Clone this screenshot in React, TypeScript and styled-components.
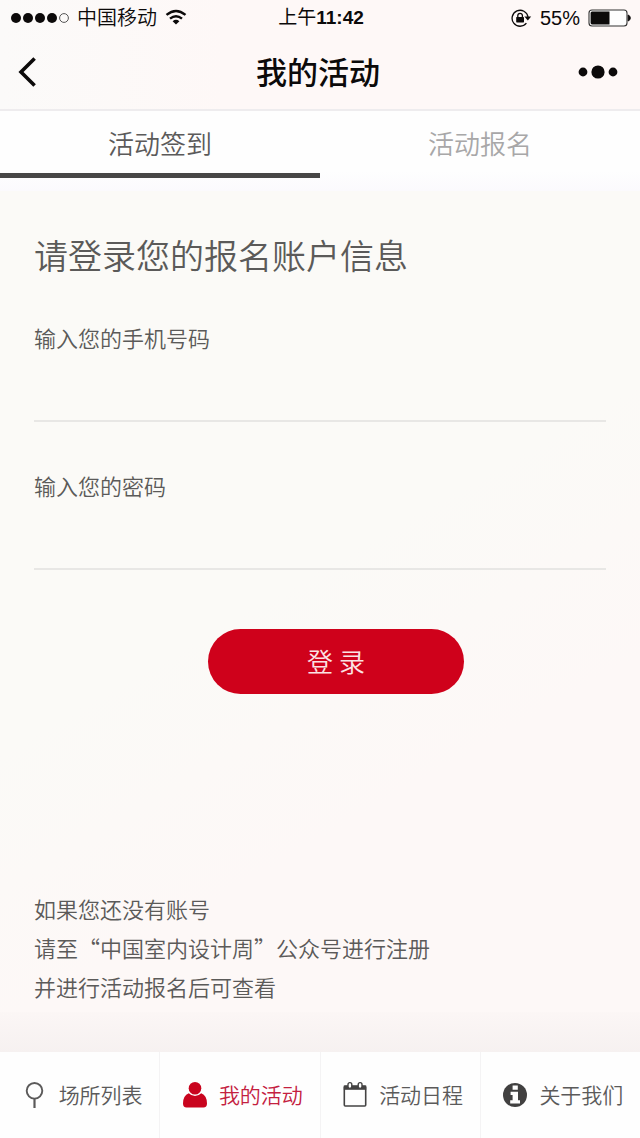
import React from 'react';
import styled, { createGlobalStyle } from 'styled-components';

const GlobalStyle = createGlobalStyle`
  *, *::before, *::after { box-sizing: border-box; }
  body {
    margin: 0;
    color: #5b5a59;
    font-family: "Noto Sans CJK SC", "Liberation Sans", sans-serif;
    font-weight: 350;
    background: #fdf8f7;
  }
  button, input { font: inherit; color: inherit; }
`;

const Screen = styled.div`
  display: flex;
  flex-direction: column;
  min-height: 100vh;
  background: linear-gradient(150deg, #fbfaf7 0%, #fbfaf7 50%, #fdf8f7 68%);
`;

const Top = styled.header`
  display: flex;
  flex-direction: column;
  color: #0c0a0a;
  background: linear-gradient(90deg, #fbfaf9 0%, #fef8f7 35%);
  border-bottom: 2px solid #eeecee;
`;

const StatusBar = styled.div`
  display: grid;
  grid-template-columns: 1fr auto 1fr;
  align-items: center;
  height: 36px;
  padding: 0 9px 0 11px;
  font-family: "Liberation Sans", "Noto Sans CJK SC", sans-serif;
  font-size: 20px;
  line-height: 24px;
`;

const StatusGroup = styled.div<{ $end?: boolean }>`
  display: flex;
  align-items: center;
  justify-content: ${(p) => (p.$end ? 'flex-end' : 'flex-start')};
  gap: 8px;
  font-weight: ${(p) => (p.$end ? 400 : 350)};
`;

const Clock = styled.time`
  font-size: 19px;
  font-weight: 400;
  b { font-weight: 700; }
`;

const TitleBar = styled.div`
  display: grid;
  grid-template-columns: 1fr auto 1fr;
  align-items: center;
  height: 73px;
  padding: 0 22px 2px 18px;
`;

const PageTitle = styled.h1`
  margin: 0;
  padding-bottom: 2px;
  font-size: 31px;
  line-height: 40px;
  font-weight: 500;
`;

const IconButton = styled.button<{ $end?: boolean }>`
  display: flex;
  justify-self: ${(p) => (p.$end ? 'end' : 'start')};
  padding: 0;
  border: 0;
  background: none;
  cursor: pointer;
`;

const Tabs = styled.nav`
  display: flex;
  height: 80px;
  padding-bottom: 13px;
  background: linear-gradient(#fefefe 75%, #fbfafd 100%);
`;

const Tab = styled.button<{ $active?: boolean }>`
  flex: 1;
  padding: 2px 0 0;
  border: 0;
  border-bottom: 5px solid ${(p) => (p.$active ? '#474646' : 'transparent')};
  background: none;
  color: ${(p) => (p.$active ? '#5b5a5a' : '#a8a7a8')};
  font-size: 26px;
  line-height: 32px;
  cursor: pointer;
`;

const Main = styled.main`
  flex: 1;
  display: flex;
  flex-direction: column;
  padding: 40px 34px 0;
`;

const Heading = styled.h2`
  margin: 0 0 38px;
  font-size: 34px;
  line-height: 48px;
  font-weight: 350;
`;

const Field = styled.div`
  display: flex;
  flex-direction: column;
  margin-bottom: 43px;
`;

const FieldLabel = styled.label`
  font-size: 22px;
  line-height: 40px;
`;

const TextInput = styled.input`
  width: 100%;
  height: 65px;
  padding: 0 0 4px;
  border: 0;
  border-bottom: 2px solid #e8e7e5;
  border-radius: 0;
  outline: none;
  background: transparent;
  font-size: 24px;
`;

const Actions = styled.div`
  display: flex;
  justify-content: center;
  padding: 16px 0 0 32px;
`;

const SubmitButton = styled.button`
  width: 256px;
  height: 65px;
  padding: 0 0 2px;
  border: 0;
  border-radius: 33px;
  background: #cf011b;
  color: #fbe3e4;
  font-size: 26px;
  cursor: pointer;
`;

const Notes = styled.p`
  margin: auto 0 0;
  padding-bottom: 6px;
  font-size: 22px;
  line-height: 39px;
`;

const Shade = styled.div`
  height: 40px;
  background: linear-gradient(rgba(120, 110, 120, 0.01), rgba(120, 110, 120, 0.05));
`;

const TabBar = styled.nav`
  display: flex;
  height: 86px;
  background: #fefefe;
`;

const TabBarLink = styled.a<{ $active?: boolean }>`
  flex: 1;
  display: flex;
  align-items: center;
  justify-content: center;
  gap: 12px;
  padding-left: 6px;
  color: ${(p) => (p.$active ? '#c4203f' : '#5b5a5a')};
  font-size: 21px;
  line-height: 32px;
  white-space: nowrap;
  text-decoration: none;
  & + & { border-left: 1px solid #f4f3f4; }
`;

const TabBarLabel = styled.span`
  padding-bottom: 3px;
`;

const SignalDots = () => (
  <svg width="58" height="12" viewBox="0 0 58 12" aria-hidden="true">
    {[5, 17, 29, 41].map((x) => (
      <circle key={x} cx={x} cy="6" r="5" fill="#0c0a0a" />
    ))}
    <circle cx="53" cy="6" r="4.4" fill="none" stroke="#555" strokeWidth="1" />
  </svg>
);

const Wifi = () => (
  <svg width="22" height="18" viewBox="0 0 22 18" fill="none" stroke="#0c0a0a" aria-hidden="true">
    <path d="M1.5 5.9 Q11 -2 20.5 5.9" strokeWidth="2.4" />
    <path d="M5 9.7 Q11 4.6 17 9.7" strokeWidth="2.4" />
    <path d="M7.6 12.3 Q11 9.4 14.4 12.3 L11 15.6 Z" fill="#0c0a0a" stroke="none" />
  </svg>
);

const RotationLock = () => (
  <svg width="21" height="18" viewBox="0 0 21 18" fill="none" aria-hidden="true">
    <path d="M15.4 14.2 A8 8 0 1 1 17 8" stroke="#0c0a0a" strokeWidth="1.3" />
    <path d="M13.4 7.4 H20.2 L16.8 11.4 Z" fill="#0c0a0a" />
    <rect x="5.2" y="8" width="7.8" height="5.4" rx="0.6" fill="#0c0a0a" />
    <path d="M6.8 8.4 V6.6 A2.3 2.3 0 0 1 11.4 6.6 V8.4" stroke="#0c0a0a" strokeWidth="1.3" />
  </svg>
);

const Battery = () => (
  <svg width="43" height="18" viewBox="0 0 43 18" aria-hidden="true">
    <rect x="1" y="1" width="38" height="16" rx="3" fill="#fefefe" stroke="#333" strokeWidth="1.1" />
    <path d="M4 2.6 H21.5 V15.4 H4 A1.5 1.5 0 0 1 2.6 14 V4 A1.5 1.5 0 0 1 4 2.6 Z" fill="#0c0a0a" />
    <path d="M40.2 6 A3.2 3.2 0 0 1 40.2 12 Z" fill="#0c0a0a" stroke="#0c0a0a" />
  </svg>
);

const BackArrow = () => (
  <svg width="19" height="32" viewBox="0 0 19 32" fill="none" aria-hidden="true">
    <path d="M16.6 2.4 L3 16 L16.6 29.6" stroke="#0c0a0a" strokeWidth="3.6" />
  </svg>
);

const MoreDots = () => (
  <svg width="40" height="14" viewBox="0 0 40 14" fill="#0c0a0a" aria-hidden="true">
    <circle cx="5" cy="7" r="4.4" />
    <circle cx="20" cy="7" r="6.6" />
    <circle cx="35" cy="7" r="4.4" />
  </svg>
);

const PlaceIcon = () => (
  <svg width="24" height="28" viewBox="0 0 24 28" fill="none" stroke="#5b5a5a" aria-hidden="true">
    <circle cx="11.5" cy="9.8" r="7.8" strokeWidth="1.9" />
    <path d="M11.5 17.6 V27" strokeWidth="2.2" />
  </svg>
);

const PersonIcon = () => (
  <svg width="24" height="28" viewBox="0 0 24 28" fill="#c9041e" aria-hidden="true">
    <circle cx="12" cy="7.3" r="6.3" />
    <path d="M5.8 12.2 Q8.5 15 12 15 Q15.5 15 18.2 12.2 Q24 14.5 24 22.5 Q24 26.6 20.4 26.6 H3.6 Q0 26.6 0 22.5 Q0 14.5 5.8 12.2 Z" />
  </svg>
);

const CalendarIcon = () => (
  <svg width="24" height="28" viewBox="0 0 24 28" fill="none" stroke="#444343" aria-hidden="true">
    <rect x="1.3" y="5.2" width="21.4" height="19.8" rx="1" strokeWidth="1.6" />
    <path d="M0.8 4.4 H23.2 V8.8 H0.8 Z" fill="#444343" stroke="none" />
    <rect x="5" y="1.6" width="3.8" height="5.8" rx="1.8" fill="#fefefe" strokeWidth="1.4" />
    <rect x="15.2" y="1.6" width="3.8" height="5.8" rx="1.8" fill="#fefefe" strokeWidth="1.4" />
  </svg>
);

const InfoIcon = () => (
  <svg width="24" height="28" viewBox="0 0 24 28" aria-hidden="true">
    <circle cx="12" cy="14" r="12" fill="#414040" />
    <path d="M9.6 4.6 H14.8 V8.8 H9.6 Z M7.6 10.8 H15 V19.2 H17 V22.6 H7.2 V19.2 H9.6 V14 H7.6 Z" fill="#fefefe" />
  </svg>
);

const links = [
  { label: '场所列表', href: '#places', icon: <PlaceIcon /> },
  { label: '我的活动', href: '#mine', icon: <PersonIcon />, active: true },
  { label: '活动日程', href: '#schedule', icon: <CalendarIcon /> },
  { label: '关于我们', href: '#about', icon: <InfoIcon /> },
];

export default function App() {
  return (
    <Screen lang="zh-CN">
      <GlobalStyle />
      <Top>
        <StatusBar>
          <StatusGroup>
            <SignalDots />
            <span>中国移动</span>
            <Wifi />
          </StatusGroup>
          <Clock>上午<b>11:42</b></Clock>
          <StatusGroup $end>
            <RotationLock />
            <span>55%</span>
            <Battery />
          </StatusGroup>
        </StatusBar>
        <TitleBar>
          <IconButton type="button" aria-label="返回"><BackArrow /></IconButton>
          <PageTitle>我的活动</PageTitle>
          <IconButton type="button" aria-label="更多" $end><MoreDots /></IconButton>
        </TitleBar>
      </Top>
      <Tabs>
        <Tab type="button" $active>活动签到</Tab>
        <Tab type="button">活动报名</Tab>
      </Tabs>
      <Main>
        <Heading>请登录您的报名账户信息</Heading>
        <form onSubmit={(e) => e.preventDefault()}>
          <Field>
            <FieldLabel htmlFor="phone">输入您的手机号码</FieldLabel>
            <TextInput id="phone" type="tel" />
          </Field>
          <Field>
            <FieldLabel htmlFor="password">输入您的密码</FieldLabel>
            <TextInput id="password" type="password" />
          </Field>
          <Actions>
            <SubmitButton type="submit">登 录</SubmitButton>
          </Actions>
        </form>
        <Notes>
          如果您还没有账号<br />
          请至“中国室内设计周”公众号进行注册<br />
          并进行活动报名后可查看
        </Notes>
      </Main>
      <Shade />
      <TabBar>
        {links.map((l) => (
          <TabBarLink key={l.href} href={l.href} $active={l.active}>
            {l.icon}
            <TabBarLabel>{l.label}</TabBarLabel>
          </TabBarLink>
        ))}
      </TabBar>
    </Screen>
  );
}
